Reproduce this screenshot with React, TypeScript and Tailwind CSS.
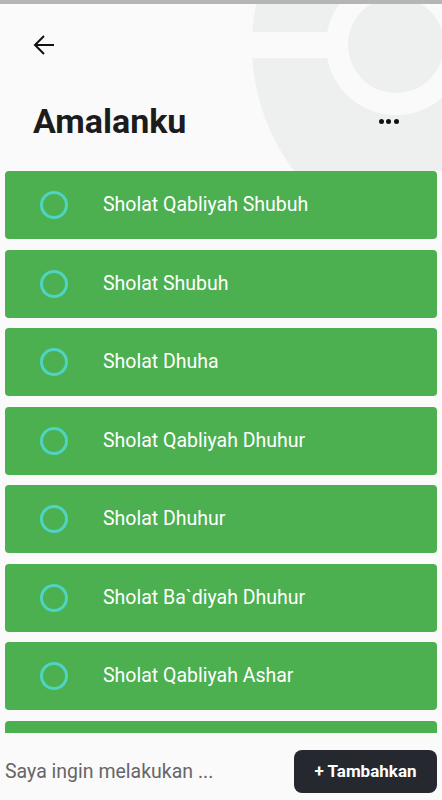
import React from 'react';

const items = [
  'Sholat Qabliyah Shubuh',
  'Sholat Shubuh',
  'Sholat Dhuha',
  'Sholat Qabliyah Dhuhur',
  'Sholat Dhuhur',
  'Sholat Ba`diyah Dhuhur',
  'Sholat Qabliyah Ashar',
  'Sholat Ashar',
];

const App: React.FC = () => {
  return (
    <div
      className="h-[800px] w-full flex flex-col bg-[#fafafa] overflow-hidden"
      style={{ fontFamily: 'Roboto, "Noto Sans", sans-serif' }}
    >
      {/* header */}
      <div className="relative h-[171px] shrink-0 overflow-hidden">
        <svg className="absolute left-0 top-0 pointer-events-none" width="442" height="171" viewBox="0 0 442 171">
          <circle cx="462" cy="45" r="210" fill="#eeefef" />
          <rect x="240" y="32" width="160" height="26" fill="#fafafa" />
          <circle cx="396" cy="45" r="70" fill="#fafafa" />
          <circle cx="396" cy="45" r="48" fill="#eeefef" />
        </svg>
        <div className="relative h-1 bg-[#b5b5b5]" />
        <div className="relative h-[82px] flex items-center pl-[33px]">
          <svg width="22" height="22" viewBox="0 0 22 22" fill="none" stroke="#111" strokeWidth="2">
            <path d="M2 11H21M11 2L2 11L11 20" />
          </svg>
        </div>
        <div className="relative h-[70px] flex items-center justify-between pl-[33px] pr-[43px]">
          <h1 className="text-[34px] font-bold text-[#1c1c1c] leading-none">Amalanku</h1>
          <div className="flex gap-[2.6px]">
            <span className="w-[5px] h-[5px] rounded-full bg-[#111]" />
            <span className="w-[5px] h-[5px] rounded-full bg-[#111]" />
            <span className="w-[5px] h-[5px] rounded-full bg-[#111]" />
          </div>
        </div>
      </div>

      {/* list */}
      <div className="flex-1 overflow-hidden px-[5px] flex flex-col gap-[10.5px]">
        {items.map((item) => (
          <div key={item} className="h-[68px] shrink-0 rounded bg-[#4caf50] flex items-center">
            <span className="ml-[35px] w-[28px] h-[28px] rounded-full border-[3px] border-[#4fd3c3]" />
            <span className="ml-[35px] text-[19.5px] text-white">{item}</span>
          </div>
        ))}
      </div>

      {/* input bar */}
      <div className="h-[67px] shrink-0 flex items-center justify-between gap-2 px-[5px] pt-[10px]">
        <input
          className="min-w-0 flex-1 h-[40px] leading-[40px] bg-transparent outline-none text-[19.5px] text-[#333] placeholder:text-[#666]"
          placeholder="Saya ingin melakukan ..."
        />
        <button className="w-[143px] h-[43px] shrink-0 rounded-lg bg-[#25282e] text-white text-[17px] font-bold">
          + Tambahkan
        </button>
      </div>
    </div>
  );
};

export default App;
